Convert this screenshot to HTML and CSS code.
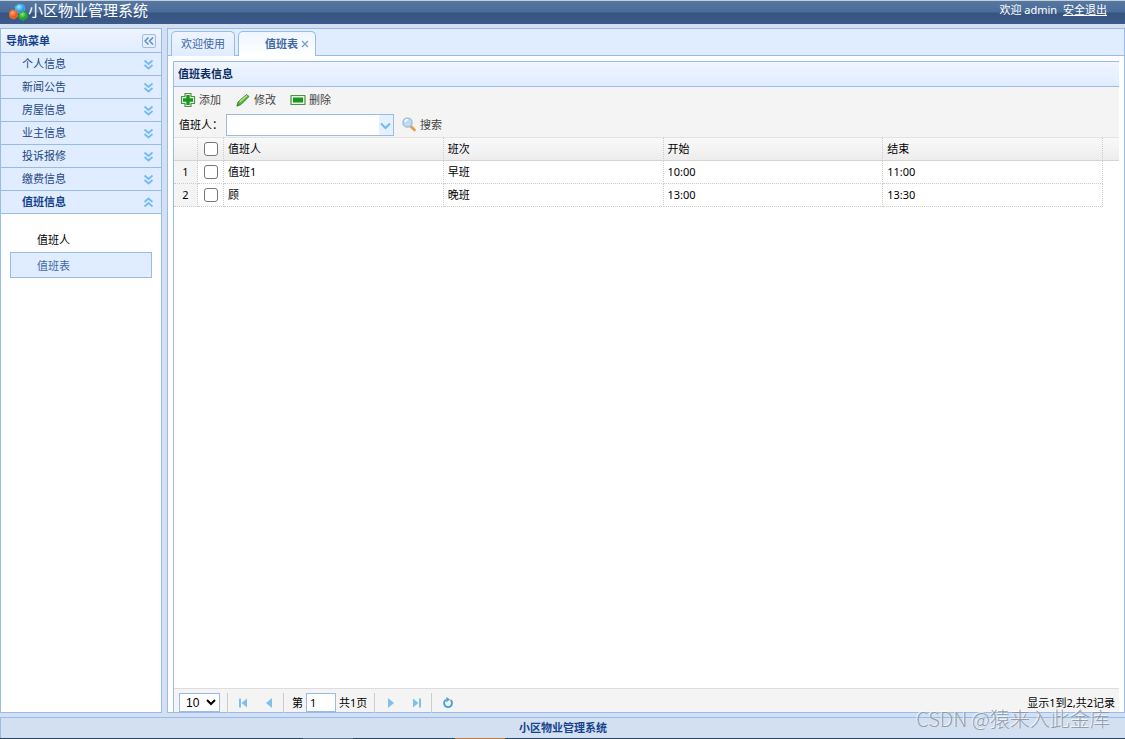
FILE: index.html
```html
<!DOCTYPE html>
<html lang="zh-CN">
<head>
<meta charset="utf-8">
<title>小区物业管理系统</title>
<link rel="stylesheet" href="styles.css">
</head>
<body>
<svg class="defs" aria-hidden="true">
  <symbol id="down" viewBox="0 0 11 11"><path d="M1.500 1.500 5.500 5 9.500 1.500M1.500 6 5.500 9.500 9.500 6" fill="none" stroke="#74bbf3" stroke-width="1.700"/></symbol>
  <symbol id="up" viewBox="0 0 11 11"><path d="M1.500 5 5.500 1.500 9.500 5M1.500 9.500 5.500 6 9.500 9.500" fill="none" stroke="#74bbf3" stroke-width="1.700"/></symbol>
</svg>
<header class="topbar">
  <div class="brand">
    <svg class="logo" viewBox="0 0 20 18" aria-hidden="true">
      <defs>
        <radialGradient id="lb" cx=".4" cy=".3"><stop offset="0" stop-color="#a5e6ff"/><stop offset="1" stop-color="#2a9be0"/></radialGradient>
        <radialGradient id="lo" cx=".4" cy=".3"><stop offset="0" stop-color="#ffb070"/><stop offset="1" stop-color="#f0561c"/></radialGradient>
        <radialGradient id="lg" cx=".4" cy=".3"><stop offset="0" stop-color="#8af07a"/><stop offset="1" stop-color="#1f9e2a"/></radialGradient>
      </defs>
      <path d="M7 3.500 11 1l5 1.500.8 4.500-4 3.500L8 9Z" fill="url(#lb)" stroke="#3fb2ee" stroke-linejoin="round"/>
      <path d="M1.300 9.500 4.500 7l4.500 1.500.5 5L6 16l-4-1.500Z" fill="url(#lo)" stroke="#f4692c" stroke-linejoin="round"/>
      <path d="M11 11 15 8.500l4 2 .3 4-3.800 3-4.500-2Z" fill="url(#lg)" stroke="#2cae35" stroke-linejoin="round"/>
    </svg>
    <span>小区物业管理系统</span>
  </div>
  <div class="user">欢迎 admin <a href="#">安全退出</a></div>
</header>

<div class="workspace">
  <nav class="sidebar" aria-label="导航菜单">
    <div class="side-title"><span>导航菜单</span>
      <button class="collapse" type="button" aria-label="折叠"><svg viewBox="0 0 12 12"><path d="M5.500 2.500 2 6l3.500 3.500M10 2.500 6.500 6 10 9.500" fill="none" stroke="#5b85c0" stroke-width="1.400"/></svg></button>
    </div>
    <button class="group" type="button">个人信息<svg><use href="#down"/></svg></button>
    <button class="group" type="button">新闻公告<svg><use href="#down"/></svg></button>
    <button class="group" type="button">房屋信息<svg><use href="#down"/></svg></button>
    <button class="group" type="button">业主信息<svg><use href="#down"/></svg></button>
    <button class="group" type="button">投诉报修<svg><use href="#down"/></svg></button>
    <button class="group" type="button">缴费信息<svg><use href="#down"/></svg></button>
    <button class="group open" type="button">值班信息<svg><use href="#up"/></svg></button>
    <div class="links">
      <a href="#">值班人</a>
      <a href="#" class="current">值班表</a>
    </div>
  </nav>

  <main class="content">
    <div class="tabs">
      <button class="tab" type="button">欢迎使用</button>
      <div class="tab active"><a href="#">值班表</a><button class="close" type="button" aria-label="关闭"><svg viewBox="0 0 8 8"><path d="M1 1l6 6M7 1 1 7" stroke="#7d9fcb" stroke-width="1.400"/></svg></button></div>
    </div>
    <section class="panel">
      <h1 class="panel-title">值班表信息</h1>
      <div class="toolbar">
        <div class="actions">
          <button type="button"><svg viewBox="0 0 16 16"><path d="M5 1.500h6V4.500h3.500v7H11v3H5v-3H1.500v-7H5Z" fill="#e6f3e4" stroke="#4f8f50" stroke-width="1.200" stroke-linejoin="round"/><path d="M6.300 3h3.400v3.300H13v3.400H9.700V13H6.300V9.700H3V6.300h3.300Z" fill="#159a1b"/></svg>添加</button>
          <button type="button"><svg viewBox="0 0 16 16"><path d="M2 14l1-4L11.500 2.500 14 4.500 6 12.500Z" fill="#58b53c" stroke="#3e8e2c" stroke-linejoin="round"/><path d="M4.500 10 12 3.500" stroke="#b9ec9c" stroke-width="1.200"/><path d="M1.500 14.500l1-3 2 2Z" fill="#5d6b4c"/></svg>修改</button>
          <button type="button"><svg viewBox="0 0 16 16"><path d="M1 3.500h14v9H1Z" fill="#e6f3e4" stroke="#4f8f50" stroke-width="1.200" stroke-linejoin="round"/><path d="M3 5.500h10v5H3Z" fill="#159a1b"/></svg>删除</button>
        </div>
        <div class="search">
          <label for="person">值班人：</label>
          <span class="combo"><input id="person" type="text"><button type="button" aria-label="展开"><svg viewBox="0 0 11 8"><path d="M1 1.500 5.500 6 10 1.500" fill="none" stroke="#71b9f2" stroke-width="2"/></svg></button></span>
          <button class="find" type="button"><svg viewBox="0 0 16 16"><path d="M9.500 9l4 4" stroke="#e69a45" stroke-width="2.600" stroke-linecap="round"/><circle cx="6.500" cy="5.500" r="4.500" fill="#b9defa" stroke="#a8bed2" stroke-width="1.500"/><path d="M4 5a3 3 0 0 1 3-2.500" fill="none" stroke="#fff" stroke-width="1.300"/></svg>搜索</button>
        </div>
      </div>
      <div class="grid">
        <table>
          <colgroup><col class="c-num"><col class="c-check"><col><col><col><col><col class="c-gutter"></colgroup>
          <thead>
            <tr><th></th><th><input type="checkbox" aria-label="全选"></th><th>值班人</th><th>班次</th><th>开始</th><th>结束</th><th class="gutter"></th></tr>
          </thead>
          <tbody>
            <tr><td class="num">1</td><td class="tick"><input type="checkbox" aria-label="选择第1行"></td><td>值班1</td><td>早班</td><td>10:00</td><td>11:00</td><td class="gutter"></td></tr>
            <tr><td class="num">2</td><td class="tick"><input type="checkbox" aria-label="选择第2行"></td><td>顾</td><td>晚班</td><td>13:00</td><td>13:30</td><td class="gutter"></td></tr>
          </tbody>
        </table>
      </div>
      <div class="pager">
        <select aria-label="每页条数"><option>10</option><option>20</option></select>
        <i class="sep"></i>
        <button type="button" aria-label="首页"><svg viewBox="0 0 12 12"><path d="M2 1.500h2v9H2ZM10 1.500v9L4.500 6Z" fill="#7fc0ec"/></svg></button>
        <button type="button" aria-label="上一页"><svg viewBox="0 0 12 12"><path d="M9 1v10L3 6Z" fill="#7fc0ec"/></svg></button>
        <i class="sep"></i>
        <label for="page">第</label><input id="page" type="text" value="1"><span>共1页</span>
        <i class="sep"></i>
        <button type="button" aria-label="下一页"><svg viewBox="0 0 12 12"><path d="M3 1v10l6-5Z" fill="#7fc0ec"/></svg></button>
        <button type="button" aria-label="末页"><svg viewBox="0 0 12 12"><path d="M8 1.500h2v9H8ZM2 1.500v9L7.500 6Z" fill="#7fc0ec"/></svg></button>
        <i class="sep"></i>
        <button type="button" aria-label="刷新"><svg viewBox="0 0 12 12"><path d="M8.500 3A4 4 0 1 1 4 2.700" fill="none" stroke="#449fda" stroke-width="1.800"/><path d="M4.300 0v5.200L8 2.500Z" fill="#449fda"/></svg></button>
        <span class="total">显示1到2,共2记录</span>
      </div>
    </section>
  </main>
</div>

<footer class="footer">小区物业管理系统</footer>
<div class="edge"><i class="edge-grey"></i><i class="edge-orange"></i></div>
<div class="watermark">CSDN @猿来入此金库</div>
</body>
</html>
```
FILE: styles.css
```css
* { box-sizing: border-box; }

body {
  margin: 0;
  height: 100vh;
  display: flex;
  flex-direction: column;
  position: relative;
  overflow: hidden;
  background: #d2e0f2;
  color: #000;
  font: 11px/16px "Noto Sans", "Noto Sans CJK SC", sans-serif;
}

button, input, select { font: inherit; color: inherit; margin: 0; }
button { border: 0; padding: 0; background: none; cursor: pointer; }
a { color: inherit; text-decoration: none; }
svg { display: block; flex: none; }
.defs { position: absolute; width: 0; height: 0; }

.topbar {
  flex: none;
  height: 24px;
  padding: 0 18px 5px 8px;
  display: flex;
  align-items: center;
  justify-content: space-between;
  color: #fff;
  border-top: 1px solid #c3cfdb;
  background: linear-gradient(#56779f 0, #4a6c9c 11px, #36547f 12px, #3c5b8b 100%);
}
.brand { display: flex; align-items: center; height: 18px; font-size: 15px; line-height: 18px; }
.logo { width: 20px; height: 18px; margin-top: 4px; }
.user a { margin-left: 3px; text-decoration: underline; }

.workspace {
  flex: 1;
  min-height: 0;
  display: flex;
  gap: 5px;
  padding: 4px 0;
}

.sidebar {
  width: 162px;
  flex: none;
  background: #fff;
  border: 1px solid #99bbe8;
}
.side-title, .panel-title {
  display: flex;
  align-items: center;
  justify-content: space-between;
  margin: 0;
  padding: 0 5px;
  font-size: 11px;
  font-weight: bold;
  color: #15428b;
  background: linear-gradient(#eff5ff, #e0ecff);
  border-bottom: 1px solid #99bbe8;
}
.side-title { height: 24px; }
.collapse {
  width: 14px;
  height: 14px;
  border: 1px solid #9dbdeb;
  border-radius: 2px;
  background: #e6effd;
}
.collapse svg { width: 12px; height: 12px; }
.group {
  width: 100%;
  height: 23px;
  padding: 0 7px 0 21px;
  display: flex;
  align-items: center;
  justify-content: space-between;
  color: #24477f;
  background: #e0ecff;
  border-bottom: 1px solid #99bbe8;
}
.group svg { width: 11px; height: 11px; }
.open { font-weight: bold; color: #15428b; }
.links { padding: 12px 9px; }
.links a {
  display: block;
  height: 26px;
  padding: 5px 26px;
  border: 1px solid transparent;
}
.links .current { color: #416aa3; background: #e0ecff; border-color: #99bbe8; }

.content {
  flex: 1;
  min-width: 0;
  display: flex;
  flex-direction: column;
  background: #fff;
  border: 1px solid #99bbe8;
}
.tabs {
  flex: none;
  height: 27px;
  padding: 2px 3px 0;
  display: flex;
  gap: 3px;
  background: #e0ecff;
  border-bottom: 1px solid #99bbe8;
}
.tab {
  height: 25px;
  padding: 0 9px;
  color: #416aa3;
  border: 1px solid #99bbe8;
  border-bottom: 0;
  border-radius: 5px 5px 0 0;
  background: linear-gradient(#eff5ff, #e0ecff);
}
.active {
  display: flex;
  align-items: center;
  gap: 3px;
  padding: 0 6px 0 26px;
  font-weight: bold;
  background: linear-gradient(#eff5ff, #fff);
}
.close svg { width: 8px; height: 8px; }

.panel {
  flex: 1;
  min-height: 0;
  margin: 5px 5px 0;
  display: flex;
  flex-direction: column;
  border: 1px solid #99bbe8;
  border-width: 1px 0 0 1px;
}
.panel-title { height: 25px; color: #0e2d5f; padding: 0 4px; }
.toolbar { height: 50px; padding: 0 5px 1px; background: #f4f4f4; }
.actions { display: flex; gap: 14px; height: 26px; padding-left: 1px; }
.actions button, .find { display: flex; align-items: center; gap: 3px; color: #444; }
.actions svg { width: 16px; height: 16px; }
.search { display: flex; align-items: center; height: 23px; }
.search label { width: 47px; }
.combo {
  width: 168px;
  height: 22px;
  display: flex;
  border: 1px solid #99bbe8;
  background: #fff;
}
.combo input { flex: 1; min-width: 0; border: 0; padding: 0 4px; outline: 0; background: none; }
.combo button { width: 14px; padding: 3px 1px 0; background: #e6f0ff; }
.combo svg { width: 11px; height: 8px; }
.find { margin-left: 7px; }
.find svg { width: 16px; height: 16px; }

.grid { flex: 1; min-height: 0; overflow: hidden; }
table { width: 100%; table-layout: fixed; border-collapse: separate; border-spacing: 0; }
.c-num { width: 24px; }
.c-check { width: 26px; }
.c-gutter { width: 16px; }
th, td {
  height: 23px;
  padding: 0 4px;
  text-align: left;
  font-weight: normal;
  border-right: 1px dotted #ccc;
  border-bottom: 1px dotted #ccc;
}
th {
  height: 24px;
  padding-bottom: 1px;
  background: linear-gradient(#f9f9f9, #ededed);
  border-top: 1px solid #e2e2e2;
  border-bottom: 1px solid #d4d4d4;
}
.num { background: #f4f4f4; padding: 0; text-align: center; }
th.gutter { border-right: 0; }
td.gutter { border: 0; }
input[type="checkbox"] {
  display: block;
  width: 14px;
  height: 14px;
  margin: 0 2px;
  appearance: none;
  background: #fff;
  border: 1px solid #767676;
  border-radius: 3px;
}
input[type="checkbox"]:checked { background: #4b88d8; }

.pager {
  flex: none;
  height: 24px;
  padding: 4px 4px 0 5px;
  display: flex;
  align-items: center;
  background: #f4f4f4;
  border-top: 1px solid #ddd;
}
.pager select {
  width: 41px;
  height: 19px;
  padding: 0 0 0 2px;
  border: 1px solid #99bbe8;
  background: #fff;
  font: 12px "Liberation Sans", sans-serif;
}
.pager button { width: 26px; height: 19px; display: grid; place-items: center; }
.pager svg { width: 12px; height: 12px; }
.pager .sep { width: 1px; height: 20px; margin: 0 3px 0 7px; background: #ccc; }
.pager select + .sep { margin-right: 2px; }
.pager button + .sep { margin-left: 1px; }
.pager label { padding: 0 3px 0 5px; }
.pager input {
  width: 30px;
  height: 19px;
  padding: 0 3px;
  margin-right: 3px;
  border: 1px solid #99bbe8;
}
.total { margin-left: auto; }

.footer {
  flex: none;
  height: 21px;
  display: flex;
  align-items: center;
  justify-content: center;
  font-weight: bold;
  color: #15428b;
  border: 1px solid #99bbe8;
  border-width: 1px 0 0 1px;
}
.edge { flex: none; height: 1px; display: flex; background: #27475a; }
.edge i { width: 50px; }
.edge-grey { margin-left: 303px; background: #5d7486; }
.edge-orange { margin-left: 102px; background: #c07a3d; }

.watermark {
  position: absolute;
  right: 15px;
  bottom: 7px;
  font: 20px/26px "Noto Sans CJK SC", sans-serif;
  font-weight: 300;
  color: rgba(140, 147, 157, .9);
  text-shadow: -1px -1px 0 rgba(255, 255, 255, .7);
  pointer-events: none;
}
```
